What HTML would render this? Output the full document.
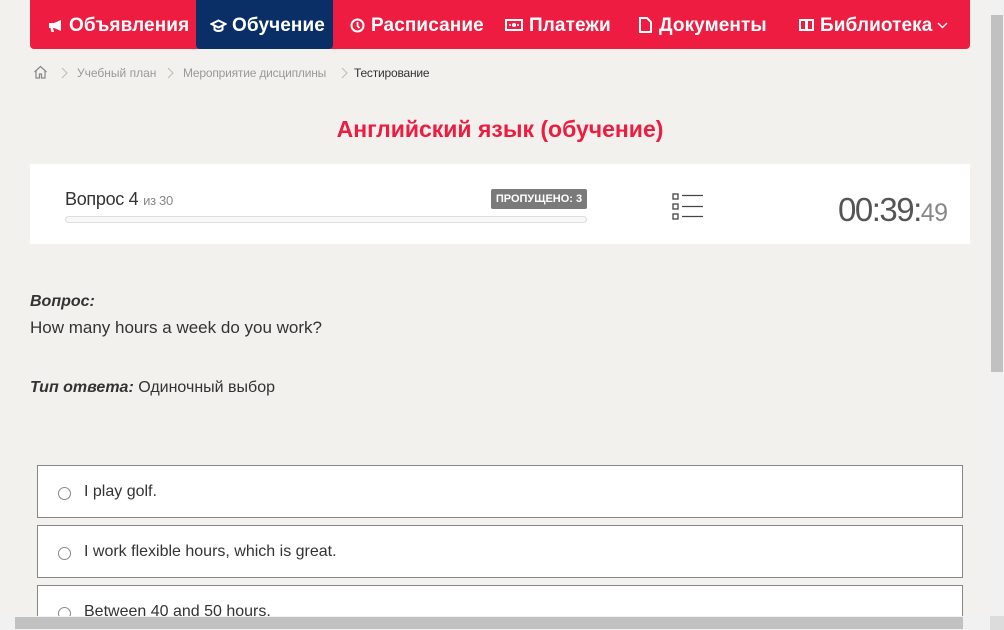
<!DOCTYPE html>
<html><head><meta charset="utf-8"><style>
*{margin:0;padding:0;box-sizing:border-box}
html,body{width:1004px;height:630px;overflow:hidden}
body{background:#f2f1ee;font-family:"Liberation Sans",sans-serif;position:relative;color:#333}
.nav{position:absolute;left:30px;top:0;width:940px;height:49px;background:#ed1c40;border-radius:0 0 4px 4px}
.act{position:absolute;left:166px;top:0;width:137px;height:49px;background:#0a2f66;border-radius:0 0 4px 4px}
.t{position:absolute;top:15px;color:#fff;font-size:19px;font-weight:bold;white-space:nowrap;letter-spacing:0.1px}
.ic{position:absolute}
.a{position:absolute;white-space:nowrap}
.opt{position:absolute;left:37px;width:926px;height:53px;background:#fff;border:1px solid #888;font-size:16px;color:#333}
.opt .r{position:absolute;left:20px;top:21px;width:13px;height:13px;border:1px solid #888;border-radius:50%}
.opt span{position:absolute;left:46px;top:17px}
.ch{position:absolute;top:67px}
</style></head><body>
<div class="nav"><div class="act"></div></div>
<svg class="ic" style="left:48px;top:19px" width="15" height="14" viewBox="0 0 15 14"><path d="M1 4h5l7-3v11l-7-3H5l1 4H3.5L2.5 9H1z" fill="#fff"/></svg>
<div class="t" style="left:69px">Объявления</div>
<svg class="ic" style="left:210px;top:19px" width="17" height="14" viewBox="0 0 17 14"><path d="M8.5 1.5L1.5 5l7 3.5 7-3.5zM4.5 7v3.5c2 2 6 2 8 0V7" fill="none" stroke="#fff" stroke-width="2"/></svg>
<div class="t" style="left:232px">Обучение</div>
<svg class="ic" style="left:350px;top:18px" width="15" height="15" viewBox="0 0 15 15"><circle cx="7.5" cy="7.5" r="6" fill="none" stroke="#fff" stroke-width="2"/><path d="M7.5 4v4l2 2" stroke="#fff" stroke-width="1.8" fill="none"/></svg>
<div class="t" style="left:371px">Расписание</div>
<svg class="ic" style="left:505px;top:19px" width="18" height="12" viewBox="0 0 18 12"><rect x="1" y="1" width="16" height="10" fill="none" stroke="#fff" stroke-width="2"/><circle cx="9" cy="6" r="2" fill="#fff"/><circle cx="5" cy="6" r="1" fill="#fff"/><circle cx="13" cy="6" r="1" fill="#fff"/></svg>
<div class="t" style="left:529px">Платежи</div>
<svg class="ic" style="left:639px;top:17px" width="13" height="16" viewBox="0 0 13 16"><path d="M1 1h7l4 4v10H1z" fill="none" stroke="#fff" stroke-width="2"/></svg>
<div class="t" style="left:659px">Документы</div>
<svg class="ic" style="left:799px;top:18px" width="15" height="14" viewBox="0 0 15 14"><path d="M1 2h6v10H1zM8 2h6v10H8zM7.5 2v11" fill="none" stroke="#fff" stroke-width="2"/></svg>
<div class="t" style="left:820px">Библиотека</div>
<svg class="ic" style="left:937px;top:22px" width="11" height="7" viewBox="0 0 11 7"><path d="M1 1l4.5 4.5L10 1" fill="none" stroke="#fff" stroke-width="1.4"/></svg>

<svg class="a" style="left:33px;top:65px" width="15" height="14" viewBox="0 0 15 14"><path d="M1.5 7L7.5 1.5 13.5 7M3 6v7h3.5V9h2v4H12V6" fill="none" stroke="#888" stroke-width="1.2"/></svg>
<svg class="ch" style="left:61px" width="7" height="12" viewBox="0 0 7 12"><path d="M1 1l5 5-5 5" fill="none" stroke="#bbb" stroke-width="1"/></svg>
<div class="a" style="left:77px;top:66px;font-size:12px;color:#999">Учебный план</div>
<svg class="ch" style="left:167px" width="7" height="12" viewBox="0 0 7 12"><path d="M1 1l5 5-5 5" fill="none" stroke="#bbb" stroke-width="1"/></svg>
<div class="a" style="left:183px;top:66px;font-size:12px;color:#999;letter-spacing:-0.2px">Мероприятие дисциплины</div>
<svg class="ch" style="left:341px" width="7" height="12" viewBox="0 0 7 12"><path d="M1 1l5 5-5 5" fill="none" stroke="#bbb" stroke-width="1"/></svg>
<div class="a" style="left:354px;top:66px;font-size:12px;color:#333;letter-spacing:-0.2px">Тестирование</div>

<div class="a" style="left:0;width:1000px;text-align:center;top:116px;font-size:23px;color:#ed1c40;font-weight:bold">Английский язык (обучение)</div>
<div class="a" style="left:30px;top:164px;width:940px;height:80px;background:#fff"></div>
<div class="a" style="left:65px;top:189px;font-size:18px;color:#333;letter-spacing:-0.3px">Вопрос 4 <span style="font-size:13px;color:#888">из 30</span></div>
<div class="a" style="left:491px;top:189px;width:96px;height:20px;background:#7a7a7a;color:#fff;font-size:11px;font-weight:bold;text-align:center;line-height:20px;border-radius:2px">ПРОПУЩЕНО: 3</div>
<div class="a" style="left:65px;top:216px;width:522px;height:7px;border:1px solid #ddd;border-radius:4px;background:#f8f8f8"></div>
<svg class="a" style="left:672px;top:193px" width="32" height="28" viewBox="0 0 32 28"><g fill="none" stroke="#444" stroke-width="1.3"><rect x="1" y="1" width="5" height="5"/><rect x="1" y="11" width="5" height="5"/><rect x="1" y="21" width="5" height="5"/><path d="M10 2.5h21M10 13.5h21M10 23.5h21"/></g></svg>
<div class="a" style="left:838px;top:191px;font-size:33px;color:#555;letter-spacing:-1.5px">00:39:<span style="font-size:25px;color:#888;letter-spacing:-0.5px">49</span></div>
<div class="a" style="left:30px;top:293px;font-size:16px;font-weight:bold;font-style:italic">Вопрос:</div>
<div class="a" style="left:30px;top:318px;font-size:17px">How many hours a week do you work?</div>
<div class="a" style="left:30px;top:379px;font-size:16px"><b><i>Тип ответа:</i></b> Одиночный выбор</div>
<div class="opt" style="top:465px"><div class="r"></div><span>I play golf.</span></div>
<div class="opt" style="top:525px"><div class="r"></div><span>I work flexible hours, which is great.</span></div>
<div class="opt" style="top:585px"><div class="r"></div><span>Between 40 and 50 hours.</span></div>
<div class="a" style="left:990px;top:0;width:14px;height:616px;background:#f1f1f1"></div>
<div class="a" style="left:991px;top:15px;width:12px;height:357px;background:#c1c1c1"></div>
<div class="a" style="left:0;top:616px;width:990px;height:14px;background:#f1f1f1"></div>
<div class="a" style="left:15px;top:617px;width:948px;height:12px;background:#c1c1c1"></div>
<div class="a" style="left:990px;top:616px;width:14px;height:14px;background:#dcdcdc"></div>
</body></html>
